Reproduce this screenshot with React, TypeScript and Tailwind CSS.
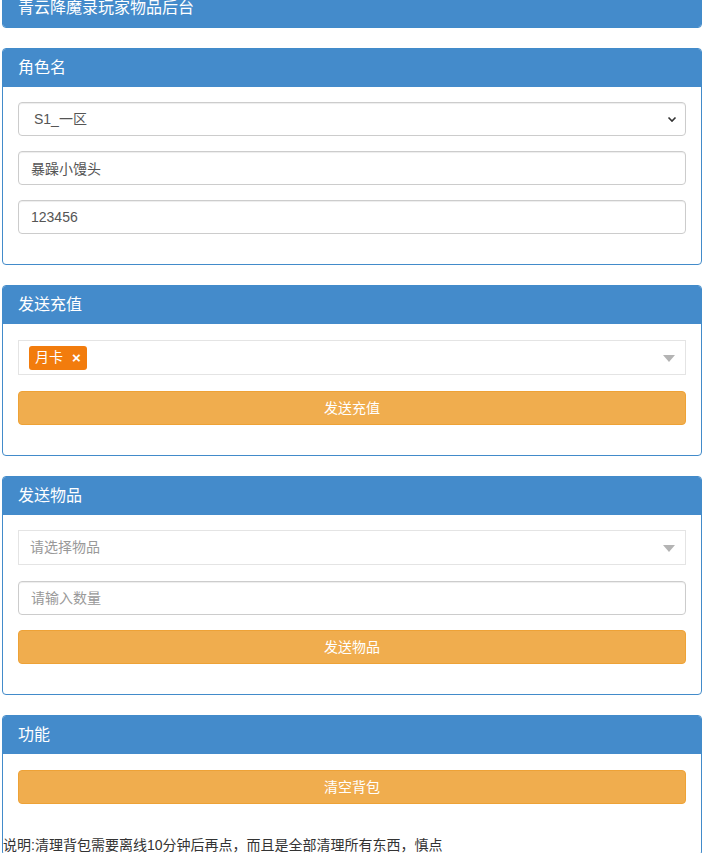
import React from "react";

const FONT = { fontFamily: '"Liberation Sans", "Noto Sans CJK SC", sans-serif' };

function Heading({ title }: { title: string }) {
  return (
    <div className="h-[38px] bg-[#448bcb] text-white text-[16px] leading-[18px] px-[15px] pt-[10px]">
      {title}
    </div>
  );
}

function Panel({ title, children }: { title: string; children?: React.ReactNode }) {
  return (
    <div className="ml-[2px] w-[700px] mb-[20px] border border-[#428bca] rounded-[4px] bg-white overflow-hidden">
      <Heading title={title} />
      {children}
    </div>
  );
}

function Chevron() {
  return (
    <svg width="10" height="7" viewBox="0 0 10 7" className="absolute right-[9px] top-[14px] pointer-events-none">
      <path d="M1.5 1.5 L5 5 L8.5 1.5" fill="none" stroke="#333" strokeWidth="1.6" />
    </svg>
  );
}

function Triangle() {
  return (
    <svg width="12" height="7" viewBox="0 0 12 7" className="absolute right-[10px] top-[14px]">
      <path d="M0 0 L12 0 L6 7 Z" fill="#b4b4b4" />
    </svg>
  );
}

const inputCls =
  "block w-full h-[34px] px-[12px] border border-[#ccc] rounded-[4px] text-[14px] text-[#555] bg-white shadow-[inset_0_1px_1px_rgba(0,0,0,0.075)] outline-none placeholder:text-[#999]";

const btnCls =
  "block w-full h-[34px] bg-[#f0ad4e] border border-[#eea236] rounded-[4px] text-white text-[14px] text-center";

export default function App() {
  return (
    <div style={FONT} className="bg-white min-h-[853px] text-[#333] text-[14px] overflow-hidden">
      <div className="ml-[2px] w-[700px] -mt-[12px] mb-[20px] border border-[#428bca] rounded-[4px] overflow-hidden">
        <Heading title="青云降魔录玩家物品后台" />
      </div>

      <Panel title="角色名">
        <div className="p-[15px]">
          <div className="relative mb-[15px]">
            <select className={inputCls + " appearance-none pl-[15px]"} defaultValue="s1">
              <option value="s1">S1_一区</option>
            </select>
            <Chevron />
          </div>
          <div className="mb-[15px]">
            <input className={inputCls} defaultValue="暴躁小馒头" />
          </div>
          <div className="mb-[15px]">
            <input className={inputCls} defaultValue="123456" />
          </div>
        </div>
      </Panel>

      <Panel title="发送充值">
        <div className="p-[15px] pt-[16px]">
          <div className="relative mb-[16px] h-[35px] border border-[#e4e4e4] bg-white flex items-center pl-[10px]">
            <span className="inline-flex items-center h-[24px] px-[6px] bg-[#f27c0d] text-white text-[14px] rounded-[3px]">
              月卡
              <span className="ml-[9px] text-[15px] font-bold leading-none">×</span>
            </span>
            <Triangle />
          </div>
          <div className="mb-[15px]">
            <button className={btnCls}>发送充值</button>
          </div>
        </div>
      </Panel>

      <Panel title="发送物品">
        <div className="p-[15px]">
          <div className="relative mb-[16px] h-[35px] border border-[#e4e4e4] bg-white flex items-center pl-[11px] text-[#999] text-[14px]">
            请选择物品
            <Triangle />
          </div>
          <div className="mb-[15px]">
            <input className={inputCls} placeholder="请输入数量" />
          </div>
          <div className="mb-[15px]">
            <button className={btnCls}>发送物品</button>
          </div>
        </div>
      </Panel>

      <div className="ml-[2px] w-[700px] border border-[#428bca] rounded-[4px] bg-white overflow-hidden">
        <Heading title="功能" />
        <div className="p-[15px] pt-[16px]">
          <div className="mb-[15px]">
            <button className={btnCls}>清空背包</button>
          </div>
        </div>
        <div className="leading-[20px] pt-[1px] text-[14px] text-[#333]">
          说明:清理背包需要离线10分钟后再点，而且是全部清理所有东西，慎点
        </div>
      </div>
    </div>
  );
}
